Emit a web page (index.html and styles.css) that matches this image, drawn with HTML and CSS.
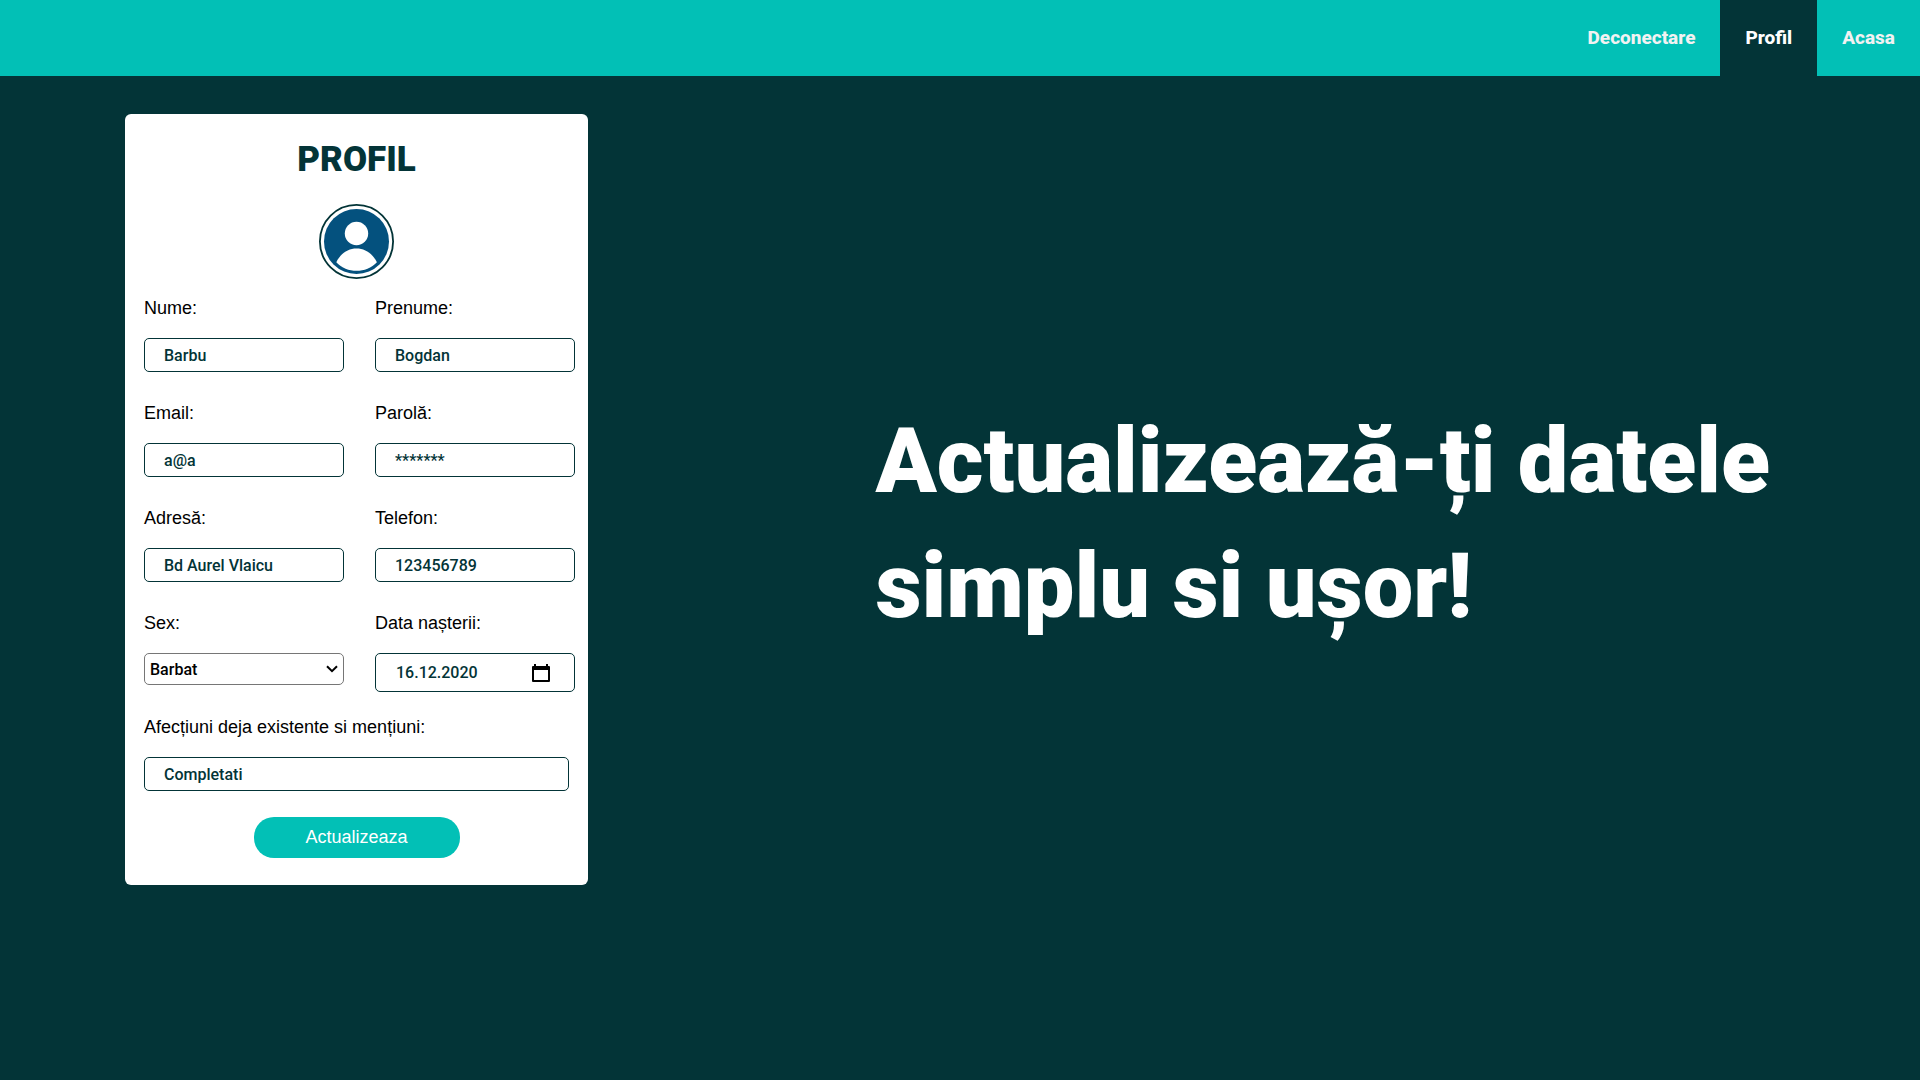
FILE: index.html
```html
<!DOCTYPE html>
<html lang="ro">
<head>
<meta charset="utf-8">
<meta name="viewport" content="width=device-width, initial-scale=1">
<title>Profil</title>
<link rel="stylesheet" href="styles.css">
</head>
<body>
<header class="topbar">
  <nav class="nav">
    <a class="nav-link" href="#deconectare">Deconectare</a>
    <a class="nav-link active" href="#profil" aria-current="page">Profil</a>
    <a class="nav-link" href="#acasa">Acasa</a>
  </nav>
</header>
<main class="page">
  <form class="card">
    <h2 class="card-title">PROFIL</h2>
    <svg class="avatar" viewBox="0 0 75 75" aria-hidden="true">
      <circle cx="37.5" cy="37.5" r="36.6" fill="#fff" stroke="#033437" stroke-width="1.8"/>
      <circle cx="37.5" cy="37.5" r="32.5" fill="#04517e"/>
      <circle cx="37.5" cy="29.5" r="11.7" fill="#fff"/>
      <path d="M17.3 58.2C21.5 49.5 29 44.5 37.5 44.5S53.5 49.5 57.9 58.2C52.5 64.2 45 66.8 37.5 66.8S22.6 64.2 17.3 58.2Z" fill="#fff"/>
    </svg>
    <div class="fields">
      <div class="field">
        <label for="nume">Nume:</label>
        <input class="control" id="nume" type="text" value="Barbu">
      </div>
      <div class="field">
        <label for="prenume">Prenume:</label>
        <input class="control" id="prenume" type="text" value="Bogdan">
      </div>
      <div class="field">
        <label for="email">Email:</label>
        <input class="control" id="email" type="text" value="a@a">
      </div>
      <div class="field">
        <label for="parola">Parolă:</label>
        <input class="control" id="parola" type="text" value="*******">
      </div>
      <div class="field">
        <label for="adresa">Adresă:</label>
        <input class="control" id="adresa" type="text" value="Bd Aurel Vlaicu">
      </div>
      <div class="field">
        <label for="telefon">Telefon:</label>
        <input class="control" id="telefon" type="text" value="123456789">
      </div>
      <div class="field">
        <label for="sex">Sex:</label>
        <div class="select-box">
          <select class="select" id="sex"><option>Barbat</option><option>Femeie</option></select>
          <svg class="chevron" viewBox="0 0 12 8" aria-hidden="true"><path d="M1 1.200l5 5 5-5" fill="none" stroke="#000" stroke-width="2"/></svg>
        </div>
      </div>
      <div class="field">
        <label for="data">Data nașterii:</label>
        <div class="date">
          <input class="date-input" id="data" type="text" value="16.12.2020">
          <button class="date-button" type="button" aria-label="Calendar">
            <svg viewBox="0 0 18 20" width="18" height="20" aria-hidden="true"><path d="M2 1h2v2h10V1h2v2h1q1 0 1 1v14q0 1-1 1H1q-1 0-1-1V4q0-1 1-1h1zM2 7v10h14V7z" fill="#000" fill-rule="evenodd"/></svg>
          </button>
        </div>
      </div>
    </div>
    <div class="field notes">
      <label for="afectiuni">Afecțiuni deja existente si mențiuni:</label>
      <input class="control" id="afectiuni" type="text" value="Completati">
    </div>
    <button class="submit" type="submit">Actualizeaza</button>
  </form>
  <h1 class="hero">Actualizează-ți datele<br>simplu si ușor!</h1>
</main>
</body>
</html>
```
FILE: styles.css
```css
* { box-sizing: border-box; }

body {
  margin: 0;
  min-height: 100vh;
  background: #033437;
  color: #000;
  font-family: "Liberation Sans", Arial, sans-serif;
  font-size: 18px;
}

.topbar { background: #02c0b6; }

.nav {
  display: flex;
  justify-content: flex-end;
}

.nav-link {
  padding: 26px 25px;
  color: #f2f2f2;
  font-family: Roboto, sans-serif;
  font-size: 19px;
  font-weight: 800;
  line-height: 24px;
  text-decoration: none;
}

.nav-link.active {
  background: #033437;
  color: #fff;
}

.page {
  display: flex;
  align-items: flex-start;
  justify-content: space-between;
  gap: 48px;
  padding: 38px 150px 38px 125px;
}

.card {
  display: flex;
  flex-direction: column;
  flex: none;
  padding: 24px 19px 27px;
  background: #fff;
  border-radius: 6px;
}

.card-title {
  margin: 0;
  color: #033437;
  font-family: Roboto, sans-serif;
  font-size: 35px;
  font-weight: 900;
  line-height: 44px;
  text-align: center;
}

.avatar {
  width: 75px;
  height: 75px;
  margin: 22px auto 19px;
}

.fields {
  display: grid;
  grid-template-columns: 200px 200px;
  gap: 31px;
  margin-right: -6px;
}

.field {
  display: flex;
  flex-direction: column;
  align-items: stretch;
  gap: 19px;
}

.field label { line-height: 21px; }

.control,
.date-input {
  width: 100%;
  height: 34px;
  padding: 0 19px;
  border: 1px solid #033437;
  border-radius: 5px;
  background: #fff;
  color: #033437;
  font-family: Roboto, sans-serif;
  font-size: 16px;
  font-weight: 500;
}

.select-box {
  display: grid;
  align-items: center;
}

.select {
  grid-area: 1 / 1;
  height: 32px;
  padding: 0 5px;
  border: 1px solid #767676;
  border-radius: 5px;
  appearance: none;
  background: #fff;
  color: #000;
  font-family: Roboto, sans-serif;
  font-size: 16px;
  font-weight: 500;
}

.chevron {
  grid-area: 1 / 1;
  justify-self: end;
  width: 12px;
  height: 8px;
  margin-right: 6px;
  pointer-events: none;
}

.date {
  display: flex;
  align-items: center;
  height: 39px;
  padding-right: 24px;
  border: 1px solid #033437;
  border-radius: 5px;
}

.date-input {
  flex: 1;
  min-width: 0;
  border: 0;
  padding: 0 20px;
}

.date-button {
  display: flex;
  padding: 0;
  border: 0;
  background: none;
}

.notes { margin-top: 25px; }

.submit {
  align-self: center;
  width: 206px;
  height: 41px;
  margin-top: 26px;
  border: 0;
  border-radius: 20px;
  background: #02c0b6;
  color: #fff;
  font-family: inherit;
  font-size: 18px;
}

.hero {
  margin: 285px 0 0;
  color: #fff;
  font-family: Roboto, sans-serif;
  font-size: 90px;
  font-weight: 900;
  line-height: 125px;
  white-space: nowrap;
}
```
